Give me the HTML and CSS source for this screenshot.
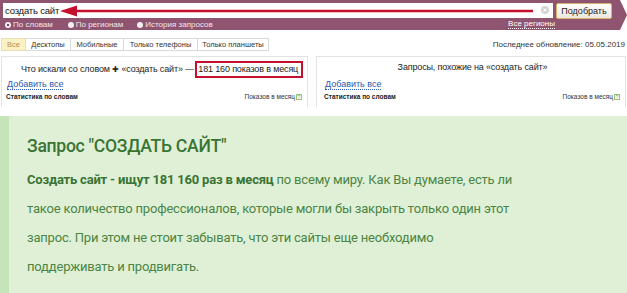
FILE: index.html
```html
<!DOCTYPE html>
<html lang="ru">
<head>
<meta charset="utf-8">
<link rel="stylesheet" href="styles.css">
</head>
<body>
<div class="topbar">
  <div class="search-row">
    <div class="input">
      <span class="query">создать сайт</span>
      <svg class="arrow" width="480" height="12" viewBox="0 0 480 12">
        <line x1="12" y1="6" x2="473" y2="6" stroke="#c4102c" stroke-width="2.4"/>
        <polygon points="0,6 17,0.5 17,11.5" fill="#c4102c"/>
      </svg>
      <span class="clear"><svg width="8" height="8" viewBox="0 0 8 8"><circle cx="4" cy="4" r="4" fill="#d4d4d4"/><path d="M2.5 2.5 L5.5 5.5 M5.5 2.5 L2.5 5.5" stroke="#fff" stroke-width="1"/></svg></span>
    </div>
    <button class="btn">Подобрать</button>
  </div>
  <div class="options-row">
    <span class="radio"><span class="dot on"></span>По словам</span>
    <span class="radio"><span class="dot"></span>По регионам</span>
    <span class="radio"><span class="dot"></span>История запросов</span>
    <span class="regions">Все регионы</span>
  </div>
</div>

<div class="tabs-row">
  <div class="tabs">
    <span class="tab active">Все</span>
    <span class="tab">Десктопы</span>
    <span class="tab">Мобильные</span>
    <span class="tab">Только телефоны</span>
    <span class="tab">Только планшеты</span>
  </div>
  <span class="updated">Последнее обновление: 05.05.2019</span>
</div>

<div class="panels">
  <div class="panel left">
    <div class="ptitle">Что искали со словом <span class="plus">✚</span> «создать сайт» — <span class="hl">181 160 показов в месяц</span></div>
    <div class="addall"><span>Добавить все</span></div>
    <div class="thead"><span>Статистика по словам</span><span>Показов в месяц<i class="q">?</i></span></div>
  </div>
  <div class="panel right">
    <div class="ptitle">Запросы, похожие на «создать сайт»</div>
    <div class="addall"><span>Добавить все</span></div>
    <div class="thead"><span>Статистика по словам</span><span>Показов в месяц<i class="q">?</i></span></div>
  </div>
</div>

<div class="note">
  <h2>Запрос "СОЗДАТЬ САЙТ"</h2>
  <p><b>Создать сайт - ищут 181 160 раз в месяц</b> по всему миру. Как Вы думаете, есть ли<br>такое количество профессионалов, которые могли бы закрыть только один этот<br>запрос. При этом не стоит забывать, что эти сайты еще необходимо<br>поддерживать и продвигать.</p>
</div>
</body>
</html>
```

FILE: styles.css
```css
* { box-sizing: border-box; }
html, body { margin: 0; padding: 0; background: #fff; }
body {
  width: 627px;
  height: 293px;
  overflow: hidden;
  font-family: "Liberation Sans", Arial, sans-serif;
  color: #000;
}

.topbar {
  height: 30px;
  background: #8f5570;
  clip-path: polygon(0 0, 620px 0, 627px 50%, 620px 100%, 0 100%);
  padding: 3px 0 0 3px;
}
.search-row { display: flex; align-items: flex-start; height: 16px; }
.input {
  position: relative;
  width: 550px;
  height: 15px;
  background: #fff;
  display: flex;
  align-items: center;
  padding-left: 2px;
}
.query { font-size: 9.5px; letter-spacing: -0.2px; line-height: 15px; color: #111; white-space: nowrap; }
.arrow { position: absolute; left: 57px; top: 2px; }
.clear { position: absolute; left: 538px; top: 3px; display: flex; }
.btn {
  margin-left: 3px;
  width: 56px;
  height: 16px;
  padding: 0;
  font-family: "Liberation Sans", Arial, sans-serif;
  font-size: 9px;
  color: #222;
  background: linear-gradient(#fffefa, #ece8df);
  border: 1px solid #d8b46a;
  border-radius: 2px;
}
.options-row {
  display: flex;
  align-items: center;
  height: 11px;
  font-size: 8px;
  color: #f3e6ec;
  padding-left: 2px;
  white-space: nowrap;
}
.radio { display: flex; align-items: center; gap: 2px; margin-right: 15px; }
.radio:nth-child(2) { margin-right: 14px; }
.dot {
  width: 6px; height: 6px; border-radius: 50%;
  background: #f4f0f2;
  display: inline-block;
}
.dot.on { background: radial-gradient(circle, #7a4a5f 0 1.3px, #f4f0f2 1.6px); }
.regions {
  margin-left: auto;
  margin-right: 72px;
  color: #fff;
  border-bottom: 1px dotted #fff;
  line-height: 8px;
}

.tabs-row {
  display: flex;
  align-items: center;
  justify-content: space-between;
  margin-top: 8px;
  padding: 0 2px 0 1px;
  height: 13px;
  white-space: nowrap;
}
.tabs { display: flex; }
.tab {
  font-size: 7.5px;
  color: #333;
  height: 13px;
  line-height: 12px;
  text-align: center;
  border: 1px solid #d9d9d9;
  border-left: none;
  background: #fff;
}
.tab:first-child { border-left: 1px solid #d9d9d9; }
.tab.active { background: #fcf1c3; color: #b38f5a; border-color: #eadfb4; width: 25px; }
.tab:nth-child(2) { width: 45px; }
.tab:nth-child(3) { width: 53px; }
.tab:nth-child(4) { width: 74px; }
.tab:nth-child(5) { width: 71px; }
.updated { font-size: 8px; color: #333; }

.panels {
  display: flex;
  gap: 8px;
  margin-top: 5px;
  padding-left: 1px;
  height: 51px;
}
.panel {
  border: 1px solid #e3e3e3;
  border-bottom: none;
  padding: 3px 4px 0 4px;
}
.panel.left { width: 307px; }
.panel.right { width: 310px; padding-left: 7px; }
.ptitle {
  font-size: 9px;
  letter-spacing: -0.15px;
  color: #222;
  height: 19px;
  line-height: 18px;
  padding-left: 15px;
  white-space: nowrap;
}
.panel.right .ptitle { text-align: center; padding-left: 0; line-height: 14px; }
.plus { font-size: 8px; }
.hl {
  display: inline-block;
  border: 2px solid #c4102c;
  padding: 0 3px 0 1px;
  line-height: 13px;
  margin-left: -1px;
}
.addall { font-size: 9px; line-height: 11px; height: 13px; padding-left: 1px; }
.addall span { color: #2a59b0; border-bottom: 1px dotted #2a59b0; }
.thead {
  display: flex;
  justify-content: space-between;
  font-size: 6.5px;
  font-weight: bold;
  color: #222;
  line-height: 10px;
  padding-right: 1px;
  white-space: nowrap;
}
.thead span:last-child { font-weight: normal; color: #333; }
.q {
  display: inline-block;
  font-style: normal;
  width: 6px; height: 6px;
  border: 1px solid #9bbf6f;
  color: #7aa04c;
  font-size: 5px;
  line-height: 4px;
  text-align: center;
  margin-left: 1px;
  vertical-align: 0;
}

.note {
  margin-top: 9px;
  height: 180px;
  background: #dff0d7;
  border-left: 9px solid #c5e4ba;
  padding: 18px 0 0 18px;
  font-family: Roboto, "Noto Sans", sans-serif;
}
.note h2 {
  margin: 0;
  font-size: 17.6px;
  font-weight: 500;
  line-height: 24px;
  color: #3a7434;
  letter-spacing: -0.3px;
}
.note p {
  margin: 7px 0 0;
  font-size: 13px;
  line-height: 29px;
  color: #4c8543;
  letter-spacing: -0.2px;
}
.note b { color: #3a7434; font-weight: 700; }
```
